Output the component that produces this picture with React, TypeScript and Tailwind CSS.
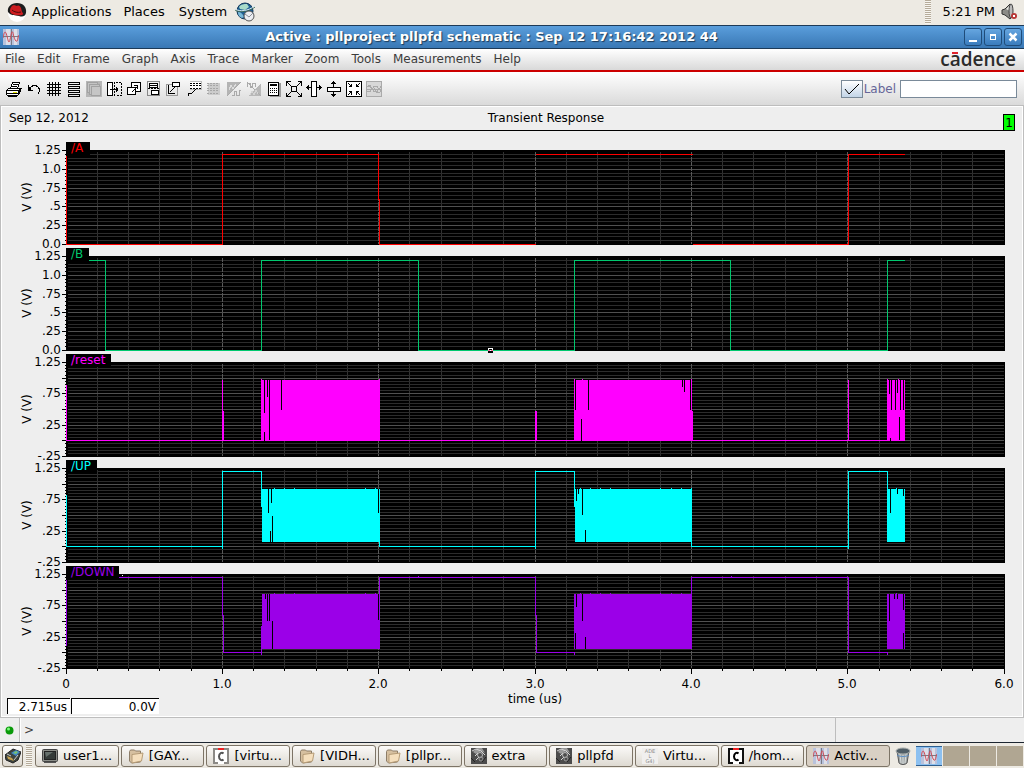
import type { ReactNode } from "react";

type Rect = [x: number, y: number, w: number, h: number];

interface Strip {
  name: string;
  color: string;
  tagWidth: number;
  min: number;
  labels: { value: number; text: string }[];
  line: string;
  fills: Rect[];
  gaps: Rect[];
}

const LEFT = 66;
const PLOT_W = 939;
const TOP = 8;
const BOTTOM = 102;

const xOf = (us: number) => Math.floor(LEFT + us * 156.36);

const logicLabels = [
  { value: 1.25, text: "1.25" },
  { value: 1, text: "1.0" },
  { value: 0.75, text: ".75" },
  { value: 0.5, text: ".5" },
  { value: 0.25, text: ".25" },
  { value: 0, text: "0.0" },
];

const burstLabels = [
  { value: 1.25, text: "1.25" },
  { value: 0.75, text: ".75" },
  { value: 0.25, text: ".25" },
  { value: -0.25, text: "-.25" },
];

const dots = (xs: number[], y: number): Rect[] => xs.map((x) => [x, y, 1, 1]);

const strips: Strip[] = [
  {
    name: "/A",
    color: "#ff0000",
    tagWidth: 24,
    min: 0,
    labels: logicLabels,
    line: "M66 13V102H222V12H378V57H379V102H535M535 12H692M692 102H848V12H904",
    fills: [],
    gaps: [],
  },
  {
    name: "/B",
    color: "#00c86e",
    tagWidth: 23,
    min: 0,
    labels: logicLabels,
    line: "M66 12H105V102H261V12H418V102H574V12H730V102H887V12H904",
    fills: [],
    gaps: [],
  },
  {
    name: "/reset",
    color: "#ff00ff",
    tagWidth: 45,
    min: -0.25,
    labels: burstLabels,
    line: "M66 30V86H887M222 25V86M223 56V86M535 56V86M536 56V86M848 25V86M692 56V86",
    fills: [[261, 26, 119, 61], [574, 26, 118, 61], [887, 26, 18, 61], ...dots([261, 379, 574, 582, 691, 887, 898], 25)],
    gaps: [
      [264, 26, 1, 33], [264, 78, 1, 9], [267, 26, 1, 17], [269, 26, 1, 60], [281, 26, 1, 30],
      [575, 26, 1, 30], [581, 65, 1, 22], [588, 26, 1, 30], [682, 26, 1, 7], [684, 26, 1, 12], [690, 26, 1, 30],
      [889, 26, 1, 14], [891, 26, 1, 30], [890, 84, 1, 3], [895, 26, 1, 30], [897, 26, 1, 13],
      [899, 63, 1, 23], [900, 26, 1, 30], [903, 26, 1, 30],
    ],
  },
  {
    name: "/UP",
    color: "#00ffff",
    tagWidth: 31,
    min: -0.25,
    labels: burstLabels,
    line: "M66 34V86H222M222 88V11H261V46M379 28V86H535M535 88V11H574V46M691 29V86H848M848 88V11H887V46",
    fills: [
      [262, 29, 117, 53], [575, 29, 117, 53], [887, 29, 18, 53],
      ...dots([274, 284, 294, 365, 375, 580, 590, 600, 610, 660, 671, 681, 691, 896], 28),
    ],
    gaps: [
      [268, 29, 1, 24], [271, 29, 1, 14], [270, 71, 1, 11], [272, 56, 1, 26], [378, 29, 1, 24],
      [576, 29, 1, 12], [578, 29, 1, 5], [582, 29, 1, 26], [585, 70, 1, 12],
      [890, 29, 1, 24], [897, 29, 1, 5], [903, 29, 1, 7],
    ],
  },
  {
    name: "/DOWN",
    color: "#9b00e8",
    tagWidth: 53,
    min: -0.25,
    labels: burstLabels,
    line: "M66 13V79M66 11H222V49H223V86H261V59M261 86V88M379 82V11H535V49H536V86H574V88M691 28V11H848V86H887V88",
    fills: [
      [262, 28, 117, 55], [574, 28, 118, 55], [887, 28, 18, 55],
      ...dots([274, 284, 294, 365, 375, 580, 590, 600, 610, 660, 671, 681, 896], 27),
      ...dots([418, 731], 10),
    ],
    gaps: [
      [265, 28, 1, 5], [267, 28, 1, 27], [269, 28, 1, 27], [272, 55, 1, 28], [378, 28, 1, 26],
      [576, 28, 1, 13], [582, 28, 1, 27], [575, 67, 1, 16], [585, 71, 1, 12],
      [889, 28, 1, 27], [894, 28, 1, 5], [897, 28, 1, 5], [903, 28, 1, 16], [903, 67, 1, 16],
    ],
  },
];

const minorX = Array.from({ length: 31 }, (_, i) => i).filter((i) => i > 0 && i < 30 && i % 5);

function StripChart({ strip, last }: { strip: Strip; last: boolean }) {
  const span = 1.25 - strip.min;
  const yOf = (v: number) => Math.round(BOTTOM - ((v - strip.min) / span) * (BOTTOM - TOP));
  const steps = Array.from({ length: Math.round(span / 0.05) + 1 }, (_, i) => i);

  return (
    <svg viewBox="2 0 1020 106" className="block w-full overflow-visible text-[12px]">
      <g shapeRendering="crispEdges">
        <rect x={LEFT} y={TOP} width={PLOT_W} height={95} fill="#000" />
        <g transform="translate(0.5 0.5)" fill="none">
          {minorX.map((i) => (
            <path key={i} d={`M${xOf(i / 5)} 9V101`} stroke="#303030" />
          ))}
          {steps.slice(1, -1).map((i) => (
            <path
              key={i}
              d={`M67 ${yOf(strip.min + i * 0.05)}H1003`}
              stroke={i % 5 === 0 ? "#505050" : "#2c2c2c"}
            />
          ))}
          {[1, 2, 3, 4, 5].map((us) => (
            <path key={us} d={`M${xOf(us)} 9V101`} stroke="#5a5a5a" strokeDasharray="4 1" />
          ))}
          {steps.map((i) => {
            const y = yOf(strip.min + i * 0.05);
            return <path key={i} d={`M${i % 5 === 0 ? 61 : 64} ${y}H66`} stroke="#000" />;
          })}
          {last &&
            Array.from({ length: 31 }, (_, i) => (
              <path key={i} d={`M${xOf(i / 5)} 102V${i % 5 ? 104 : 107}`} stroke="#000" />
            ))}
          <path d={strip.line} stroke={strip.color} />
        </g>
        {strip.fills.map(([x, y, w, h]) => (
          <rect key={`${x}-${y}`} x={x} y={y} width={w} height={h} fill={strip.color} />
        ))}
        {strip.gaps.map(([x, y, w, h]) => (
          <rect key={`${x}-${y}`} x={x} y={y} width={w} height={h} fill="#000" />
        ))}
        <rect x={LEFT} y={0} width={strip.tagWidth} height={13} fill="#000" />
        {last && <rect x={122} y={9} width={1} height={1} fill="#fff" />}
      </g>
      <text x={71} y={10} fill={strip.color}>
        {strip.name}
      </text>
      {strip.labels.map((l) => (
        <text key={l.text} x={61} y={yOf(l.value) + 4} textAnchor="end">
          {l.text}
        </text>
      ))}
      <text transform="translate(31 55) rotate(-90)" textAnchor="middle">
        V (V)
      </text>
      {strip.name === "/B" && (
        <g shapeRendering="crispEdges">
          <rect x={488} y={100} width={5} height={5} fill="#000" />
          <path d="M488 100h5v3h-1v-2h-3v2h-1z" fill="#fff" />
          <path d="M488 102h5v1h-5z" fill="#f7a" />
          <path d="M490 102h1v1h-1z" fill="#fff" />
        </g>
      )}
    </svg>
  );
}

function Px({ children, size = 16 }: { children: ReactNode; size?: number }) {
  return (
    <svg width={size} height={size} viewBox="0 0 16 16" fill="none" stroke="#000" shapeRendering="crispEdges">
      {children}
    </svg>
  );
}

const tools: { name: string; disabled?: boolean; art: ReactNode }[] = [
  {
    name: "Print",
    art: (
      <>
        <path d="M4.5 7.5l2-6h7l-2 6z" fill="#fff" />
        <path d="M7 3.5h5M6 5.5h5" />
        <path d="M.5 9.5l2-2h12v3l-3 4h-10l-1-1z" fill="#fff" />
        <path d="M0 9.5h12M1 12.5h11M12.5 9v5M13.5 8v4M14 7.5h2" />
        <path d="M7 11.5h4" stroke="#e6e600" />
        <path d="M2 15.5h9" />
      </>
    ),
  },
  {
    name: "Undo",
    art: (
      <path d="M2.5 4v6M2 9.5h5M3 8.5h2M4 7.5h1M4 6.5h1M5 5.5h2M6 4.5h5M10 5.5h2M12.5 6v2M13.5 7v4M12.5 11v2M3.5 6v3" />
    ),
  },
  { name: "Grid", art: <path d="M3.5 1v14M6.5 1v14M9.5 1v14M12.5 1v14M1 3.5h14M1 6.5h14M1 9.5h14M1 12.5h14" /> },
  {
    name: "Strips",
    art: <path d="M2.5 1.5h11v2h-11zM2.500 5.500h11v2h-11zM2.500 9.500h11v2h-11zM2.500 13.500h11v2h-11z" />,
  },
  {
    name: "Cards",
    disabled: true,
    art: (
      <g stroke="#a2a2a2">
        <path d="M0 0h16v16H0z" fill="#b6b6b6" stroke="none" />
        <path d="M1.500 1.500h10v10h-10z" fill="#c4c4c4" />
        <path d="M3.500 3.500h10v10h-10z" fill="#c4c4c4" />
        <path d="M5.500 5.500h9v9h-9z" fill="#c6c6c6" />
      </g>
    ),
  },
  {
    name: "Swap axes",
    art: (
      <>
        <path d="M1.5 1.5h5v13h-5z" fill="#fff" />
        <path d="M8.5 1v14" strokeDasharray="2 1" />
        <path d="M10 1.5h5.500v13h-6" strokeDasharray="2 1" />
        <path d="M4 8.500h8M10.500 6v5M11.500 7v3" />
      </>
    ),
  },
  {
    name: "Move trace",
    art: (
      <>
        <path d="M5.500 1.500h9v9h-9z" fill="#fff" />
        <path d="M1.500 6.500h8v7h-8z" fill="#fff" />
        <path d="M6 10.500h1M7 9.500h1M8 8.500h1M9 7.500h1M10 6.500h1M11 5.500h1M8 4.500h4M11.500 4v4" />
      </>
    ),
  },
  {
    name: "Copy window",
    art: (
      <>
        <path d="M1.500 .500h12v14h-12z" stroke="#888" />
        <path d="M3.500 2.500h8v4h-8zM5.500 9.500h7v4h-7z" fill="#fff" />
        <path d="M2 7.500h11" strokeDasharray="2 1" />
        <path d="M3 4.500h9" />
      </>
    ),
  },
  {
    name: "New subwindow",
    art: (
      <>
        <path d="M.500 3.500h11v11h-11z" stroke="#999" />
        <path d="M6.500 1.500h7v4h-7z" fill="#fff" />
        <path d="M2.500 4v9M2 12.500h7M4 10.500h1M5 9.500h1M6 8.500h1M7 7.500h1M8 6.500h1" />
      </>
    ),
  },
  {
    name: "Legend",
    art: (
      <>
        <path d="M3.500 .500h12v8h-12" fill="#fff" stroke="#bbb" />
        <path d="M4 2.500h11M4 4.500h11M4 7.500h11" strokeDasharray="2 1" />
        <path d="M9.500 8v1M8.500 9v1M7 10.500h1M6 11.500h1M2 12.500h4M2.500 12v3" />
      </>
    ),
  },
  {
    name: "Table",
    disabled: true,
    art: (
      <>
        <path d="M2 2h12v12h-12z" fill="#ccc" stroke="none" />
        <path d="M1 2.500h11M1 4.500h11M1 7.500h11M1 9.500h11M1 12.500h11" stroke="#a6a6a6" strokeDasharray="2 1" />
      </>
    ),
  },
  {
    name: "Analog to digital",
    disabled: true,
    art: (
      <>
        <path d="M1 1h14L1 15z" fill="#b4b4b4" stroke="none" />
        <path d="M3 9L5 4l2 4 3-5" stroke="#ddd" />
        <path d="M6 14.500h2v-4h2v4h3v-5h2M1 15L15 1" stroke="#aaa" />
      </>
    ),
  },
  {
    name: "Digital to analog",
    disabled: true,
    art: (
      <>
        <path d="M15 2v13H2z" fill="#b8b8b8" stroke="none" />
        <path d="M1.500 6v-4h3v4h2v-4h3v4M1 1l14 14" stroke="#aaa" />
        <path d="M4 14l2-4 2 4 2-5 2 4" stroke="#d4d4d4" />
      </>
    ),
  },
  {
    name: "Calculator",
    art: (
      <>
        <path d="M4.500 2.500h10v13h-10z" fill="#999" stroke="#999" />
        <path d="M2.500 1.500h10v13h-10z" fill="#fff" />
        <path d="M4 3.500h7M4 4.500h7" />
        <path d="M4 7.500h7M4 9.500h7M4 11.500h7" strokeDasharray="1 1" />
      </>
    ),
  },
  {
    name: "Fit",
    art: (
      <path d="M5.500 5.500h5v5h-5zM1 1l4 4M15 1l-4 4M1 15l4-4M15 15l-4-4M.500 5v-4.500h4M11.500 .500h4v4M.500 11.500v4h4M11.500 15.500h4v-4" />
    ),
  },
  {
    name: "Fit X",
    art: (
      <>
        <path d="M5.500 .500h5v15h-5z" fill="#fff" />
        <path d="M0 6.500h5M11 6.500h5M2.500 4v5M1.500 5v3M13.500 4v5M14.500 5v3" />
      </>
    ),
  },
  {
    name: "Fit Y",
    art: (
      <>
        <path d="M1.500 6.500h13v4h-13z" fill="#fff" />
        <path d="M7.500 0v6M7.500 11v5M5 2.500h5M6 1.500h3M5 13.500h5M6 14.500h3" />
      </>
    ),
  },
  {
    name: "Zoom in",
    art: (
      <>
        <path d="M.500 .500h15v15h-15z" fill="#fff" />
        <path d="M2 2l4 4M14 2l-4 4M2 14l4-4M14 14l-4-4M3 5.500h2.500v-3M13 5.500h-2.500v-3M3 10.500h2.500v3M13 10.500h-2.500v3" />
      </>
    ),
  },
  {
    name: "Eye diagram",
    disabled: true,
    art: (
      <g stroke="#aaa">
        <path d="M.500 .500h15v15h-15z" fill="#d8d8d8" />
        <path d="M1 5.500h3l4 5h3l4-5M1 10.500h3l4-5h3l4 5M2 4.500h2l3 4M14 11.500h-3l-3-4M1 8.500h14" />
      </g>
    ),
  },
];

function WaveIcon() {
  return (
    <svg width="16" height="16" viewBox="0 0 16 16" fill="none">
      <path fill="#b9c2dc" d="M0 0h16v16H0z" />
      <path fill="#dedfe8" d="M3 0h4v16H3zM11 0h3v16h-3z" />
      <path stroke="#777b86" d="M8.500 0v16M0 7.500h16" />
      <path stroke="#d24a55" d="M0 9C1 3 2 2 3 4s2 9 3 9 2-9 3-10 1 2 2 5 2 5 3 4 1-5 2-6" />
    </svg>
  );
}

function RedHat() {
  return (
    <svg width="20" height="20" viewBox="0 0 20 20">
      <circle cx="10" cy="11" r="9" fill="#fff" />
      <path d="M1 10C0 5 4 1 10 1c6 0 10 4 9 10-1 4-4 4-7 3-4-1-8 0-11-4z" fill="#1c1c1c" />
      <path d="M3 9c0-3 2-6 4-6 1 0 2 1 3 1 2-1 3 0 4 2l1 4c1 1 2 2 0 3-4 1-12 0-12-4z" fill="#cc1c20" />
      <path d="M5 8c2 2 6 3 9 2" stroke="#4c0c0c" fill="none" />
    </svg>
  );
}

function Globe() {
  return (
    <svg width="22" height="20" viewBox="0 0 22 20">
      <circle cx="10" cy="9" r="8" fill="#1f5f93" stroke="#173b5c" />
      <path d="M4 5c2-3 5-3 8-3l2 3-4 3-5-1z" fill="#a9dcc9" />
      <path d="M3 10c3 0 5 2 6 5l-2 1c-3-1-4-3-4-6z" fill="#7ab9d8" />
      <path d="M0 8c5 3 13 2 20-3" stroke="#3c6a52" fill="none" />
      <path d="M0 7c5 3 13 2 20-3" stroke="#d7e9f2" fill="none" />
      <circle cx="14" cy="14" r="5" fill="#eceef2" stroke="#555" />
      <path d="M10 12l4 3 4-4" stroke="#8a8f99" fill="none" />
    </svg>
  );
}

function Speaker() {
  return (
    <svg width="17" height="18" viewBox="0 0 17 18">
      <path d="M1 7l3-1 5-5c3 1 3 14 0 15l-5-4-3-1z" fill="#8c8c88" stroke="#333" />
      <path d="M5 6l4-4v6z" fill="#e8e8e4" />
      <ellipse cx="10" cy="8" rx="2" ry="7" fill="#bbb" stroke="#444" />
      <circle cx="13" cy="13" r="3" fill="#b83838" />
      <path d="M12 12l2 2M14 12l-2 2" stroke="#fff" />
    </svg>
  );
}

function Terminal() {
  return (
    <svg width="16" height="16" viewBox="0 0 16 16">
      <rect x=".5" y="1.500" width="15" height="12" rx="1" fill="#8b8d88" stroke="#444" />
      <rect x="2.500" y="3.500" width="11" height="8" fill="#343a38" stroke="#222" />
      <path d="M3 4h8L4 9z" fill="#66706c" />
      <path d="M2 14.500h12" stroke="#555" />
    </svg>
  );
}

function Folder() {
  return (
    <svg width="16" height="16" viewBox="0 0 16 16">
      <path d="M1.500 3.500l1-1.500h4l1 1h5v11l-9 1-2-2z" fill="#d6c0a0" stroke="#8d7d67" />
      <path d="M4 6.500l11-1.500-1.500 8L4 15z" fill="#f5dfbd" stroke="#b59b76" />
    </svg>
  );
}

function Bracket({ faded }: { faded?: boolean }) {
  return (
    <svg width="16" height="16" viewBox="0 0 16 16">
      <rect width="16" height="16" fill={faded ? "#8c8a86" : "#111"} />
      <rect x="2" y="2" width="12" height="12" fill="#fff" />
      <path d="M5 0h6v2H5zM5 14h6v2H5z" fill="#fff" />
      <path d="M5 1h6" stroke="#e22" strokeWidth="2" />
      <path d="M10.500 5.500C9 4 6 5 6 8.500S9 13 10.500 11.500" fill="none" stroke={faded ? "#555" : "#000"} strokeWidth="2" />
    </svg>
  );
}

function Schematic() {
  return (
    <svg width="16" height="16" viewBox="0 0 16 16" fill="none">
      <path fill="#4c4c4c" d="M0 0h16v16H0z" />
      <path fill="#9a9a9a" d="M2 4l4-4h5l3 5-4-2-5 3z" />
      <path stroke="#d4d4d4" d="M1 3l4-2 5 2 4 4M4 8l3-3M5 12l3-3" />
      <circle cx="9" cy="7" r="2.500" stroke="#bbb" />
      <circle cx="10" cy="11" r="2" stroke="#999" />
      <path stroke="#222" d="M0 10l4 4M11 14l4-5" />
    </svg>
  );
}

function Ade() {
  return (
    <svg width="16" height="16" viewBox="0 0 16 16" fontSize="5" fill="#888">
      <path fill="#f0efee" d="M0 0h16v16H0z" />
      <text x="8" y="5" textAnchor="middle">ADE</text>
      <text x="8" y="10" textAnchor="middle">L</text>
      <text x="8" y="15" textAnchor="middle">G4)</text>
    </svg>
  );
}

function DesktopIcon() {
  return (
    <svg width="16" height="16" viewBox="0 0 16 16">
      <path d="M0 7l8-6 8 3-3 8-5 3-7-3z" fill="#3e4440" stroke="#222" />
      <path d="M6 5l5-3 4 2-4 4z" fill="#3f86c8" />
      <path d="M8 5l3-2 2 1-2 2z" fill="#7cc36c" />
      <path d="M2 8l5 2 2 3-6-2z" fill="#c6a14e" />
      <path d="M2 6l4 2M9 12l4-5" stroke="#ccc" />
    </svg>
  );
}

function Trash() {
  return (
    <svg width="16" height="18" viewBox="0 0 16 18">
      <path d="M2 4l2 12c2 2 6 2 8 0l2-12z" fill="#a4aaaa" stroke="#555" />
      <path d="M5 7l1 9M8 8v9M11 7l-1 9" stroke="#d8dcdc" />
      <ellipse cx="8" cy="4" rx="7" ry="3" fill="#4f5d66" stroke="#a7adad" />
      <path d="M2 8c3 2 9 2 12 0" stroke="#5b8fc6" fill="none" />
    </svg>
  );
}

const tasks: { label: string; icon: ReactNode; active?: boolean }[] = [
  { label: "user1...", icon: <Terminal /> },
  { label: "[GAY...", icon: <Folder /> },
  { label: "[virtu...", icon: <Bracket faded /> },
  { label: "[VIDH...", icon: <Folder /> },
  { label: "[pllpr...", icon: <Folder /> },
  { label: "extra", icon: <Schematic /> },
  { label: "pllpfd", icon: <Schematic /> },
  { label: "Virtu...", icon: <Ade /> },
  { label: "/hom...", icon: <Bracket /> },
  { label: "Activ...", icon: <WaveIcon />, active: true },
];

const menus = ["File", "Edit", "Frame", "Graph", "Axis", "Trace", "Marker", "Zoom", "Tools", "Measurements", "Help"];

function Handle() {
  return (
    <div className="h-full w-[6px] bg-[repeating-linear-gradient(to_bottom,#b5ab9a_0px,#b5ab9a_1px,#f7f5f0_1px,#f7f5f0_2px)]" />
  );
}

function TopPanel() {
  return (
    <header className="flex h-[25px] items-center bg-[#edeae3] pr-[6px] pb-[1px] pl-[7px] text-[13px]">
      <button type="button" className="flex items-center gap-[5px]">
        <RedHat />
        Applications
      </button>
      <button type="button" className="ml-3">Places</button>
      <button type="button" className="ml-[14px]">System</button>
      <button type="button" className="ml-2" aria-label="Browser">
        <Globe />
      </button>
      <div className="ml-auto flex h-full items-center">
        <Handle />
        <span className="ml-3">5:21 PM</span>
        <button type="button" className="ml-[6px]" aria-label="Volume">
          <Speaker />
        </button>
      </div>
    </header>
  );
}

function TitleBar() {
  const button =
    "flex h-[18px] w-[18px] items-center justify-center rounded-[3px] border border-[#1f4c7a] bg-linear-to-b from-[#66a6e0] to-[#3a7cbd]";
  return (
    <div className="flex h-6 items-center border-y border-[#1d3a57] bg-linear-to-b from-[#5a9edc] to-[#3978b5] pr-[2px] pl-[3px]">
      <WaveIcon />
      <h1 className="flex-1 text-center text-[13px] font-bold text-white [text-shadow:1px_1px_1px_#1d3a57]">
        Active : pllproject pllpfd schematic : Sep 12 17:16:42 2012 44
      </h1>
      <div className="flex gap-[2px]">
        <button type="button" className={button} aria-label="Minimize">
          <Px size={16}><path d="M4 11.500h8M4 12.500h8" stroke="#fff" /></Px>
        </button>
        <button type="button" className={button} aria-label="Maximize">
          <Px size={16}><path d="M5.500 6.500h5v4h-5zM5 5.500h6" stroke="#fff" /></Px>
        </button>
        <button type="button" className={button} aria-label="Close">
          <svg width="16" height="16" viewBox="0 0 16 16">
            <path d="M4.500 4.500l7 7M11.500 4.500l-7 7" stroke="#fff" strokeWidth="2.500" />
          </svg>
        </button>
      </div>
    </div>
  );
}

function MenuBar() {
  return (
    <nav className="flex h-[23px] items-center border-b-2 border-[#cc0000] bg-linear-to-b from-white to-[#d9d9d9] pr-2 pb-[2px] pl-[5px]">
      <div className="flex gap-3 text-[12px] text-[#3c3c3c]">
        {menus.map((m) => (
          <button key={m} type="button">{m}</button>
        ))}
      </div>
      <div className="ml-auto font-['Open_Sans',sans-serif] text-[19px] leading-5 font-semibold text-[#2b2b2b]">
        c
        <span className="relative">
          a<span className="absolute top-[6px] left-[2px] h-[2px] w-[6px] bg-[#e0222c]" />
        </span>
        dence
      </div>
    </nav>
  );
}

function ToolBar() {
  return (
    <div className="flex h-[33px] items-center bg-linear-to-b from-white to-[#dadada] pr-[7px] pl-1">
      {tools.map((t) => (
        <button
          key={t.name}
          type="button"
          title={t.name}
          aria-label={t.name}
          disabled={t.disabled}
          className="flex w-5 justify-center"
        >
          <Px>{t.art}</Px>
        </button>
      ))}
      <label className="ml-auto flex items-center text-[12px] text-[#666699]">
        <span className="relative mr-[1px] flex h-[18px] w-[22px]">
          <input
            type="checkbox"
            defaultChecked
            className="h-full w-full appearance-none border border-[#7a8a99] bg-linear-to-b from-white to-[#c3d5e8]"
          />
          <svg className="pointer-events-none absolute inset-0" width="22" height="18" viewBox="0 0 22 18" fill="none">
            <path d="M4 9l4 5L18 4" stroke="#000" />
          </svg>
        </span>
        Label
      </label>
      <input
        type="text"
        aria-label="Label"
        className="ml-1 h-[18px] w-[117px] border border-[#7a8a99] bg-white px-1 text-[12px]"
      />
    </div>
  );
}

function GraphArea() {
  return (
    <main className="flex-1 border border-[#bdbdbd] bg-[#eeeeee]">
      <div className="border border-white pb-[2px]">
        <div className="mb-[11px] flex h-6 items-end pr-[7px] pl-[7px] text-[12px]">
          <div className="flex h-full flex-1 items-center border-b border-black pb-[2px]">
            <span className="leading-4">Sep 12, 2012</span>
            <span className="flex-1 text-center leading-4">Transient Response</span>
          </div>
          <button type="button" className="h-[17px] w-3 border border-black bg-[#00ff00] leading-[17px]">
            1
          </button>
        </div>

        {strips.map((s, i) => (
          <StripChart key={s.name} strip={s} last={i === strips.length - 1} />
        ))}

        <svg viewBox="2 0 1020 26" className="block w-full overflow-visible text-[12px]">
          {["0", "1.0", "2.0", "3.0", "4.0", "5.0", "6.0"].map((t, i) => (
            <text key={t} x={xOf(i)} y={16} textAnchor="middle">{t}</text>
          ))}
          <text x={535} y={31} textAnchor="middle">time (us)</text>
        </svg>

        <div className="flex gap-[1px] pl-[5px] text-right text-[12px] leading-4">
          <output className="h-4 w-[63px] border-t border-l border-black bg-white pr-[3px]">2.715us</output>
          <output className="h-4 w-[88px] border-t border-l border-black bg-white pr-[3px]">0.0V</output>
        </div>
      </div>
    </main>
  );
}

function StatusBar() {
  return (
    <div className="flex h-6 bg-[#eeeeee] text-[12px] text-[#444]">
      <div className="flex w-5 items-center justify-center border-r border-[#bdbdbd]">
        <svg width="9" height="9" viewBox="0 0 9 9">
          <circle cx="4.500" cy="4.500" r="4" fill="#0a9a0a" />
          <circle cx="3.500" cy="3" r="1.500" fill="#7dfa7d" />
        </svg>
      </div>
      <label className="flex flex-1 items-center border-l border-white pl-[3px]">
        &gt;
        <input type="text" className="ml-1 flex-1 bg-transparent outline-none" />
      </label>
      <div className="w-[189px] border-l border-[#bdbdbd]" />
    </div>
  );
}

function TaskBar() {
  return (
    <footer className="flex h-[26px] items-center border-t border-[#1c2530] bg-[#edeae3] pr-[1px] pl-[2px] text-[13px]">
      <button
        type="button"
        aria-label="Show desktop"
        className="flex h-[22px] w-[21px] items-center justify-center rounded-[3px] border border-[#7d7466] bg-linear-to-b from-white to-[#dcd7ce]"
      >
        <DesktopIcon />
      </button>
      <div className="mr-[3px] ml-[3px] h-[22px]">
        <Handle />
      </div>
      <div className="flex min-w-0 flex-1 gap-[2px]">
        {tasks.map((t) => (
          <button
            key={t.label}
            type="button"
            className={`flex h-[22px] min-w-0 flex-1 items-center overflow-hidden rounded-[3px] border border-[#7d7466] pl-[6px] whitespace-nowrap ${
              t.active ? "bg-[#d9d0c4]" : "bg-linear-to-b from-[#fbfaf8] to-[#dedad2]"
            }`}
          >
            <span className="mr-[5px] shrink-0">{t.icon}</span>
            {t.label}
          </button>
        ))}
      </div>
      <button type="button" aria-label="Trash" className="mx-[5px]">
        <Trash />
      </button>
      <div className="flex h-5 gap-[1px]">
        <button
          type="button"
          aria-label="Workspace 1"
          className="flex w-[26px] items-center justify-center border-y border-[#2f5f8f] bg-[#8cc0f0]"
        >
          <WaveIcon />
        </button>
        {[2, 3, 4].map((n) => (
          <button key={n} type="button" aria-label={`Workspace ${n}`} className="w-[26px] bg-[#b0a692]" />
        ))}
      </div>
    </footer>
  );
}

export default function App() {
  return (
    <div className="flex min-h-screen flex-col bg-[#eeeeee] font-['DejaVu_Sans',sans-serif] text-black">
      <TopPanel />
      <TitleBar />
      <MenuBar />
      <ToolBar />
      <GraphArea />
      <StatusBar />
      <TaskBar />
    </div>
  );
}
